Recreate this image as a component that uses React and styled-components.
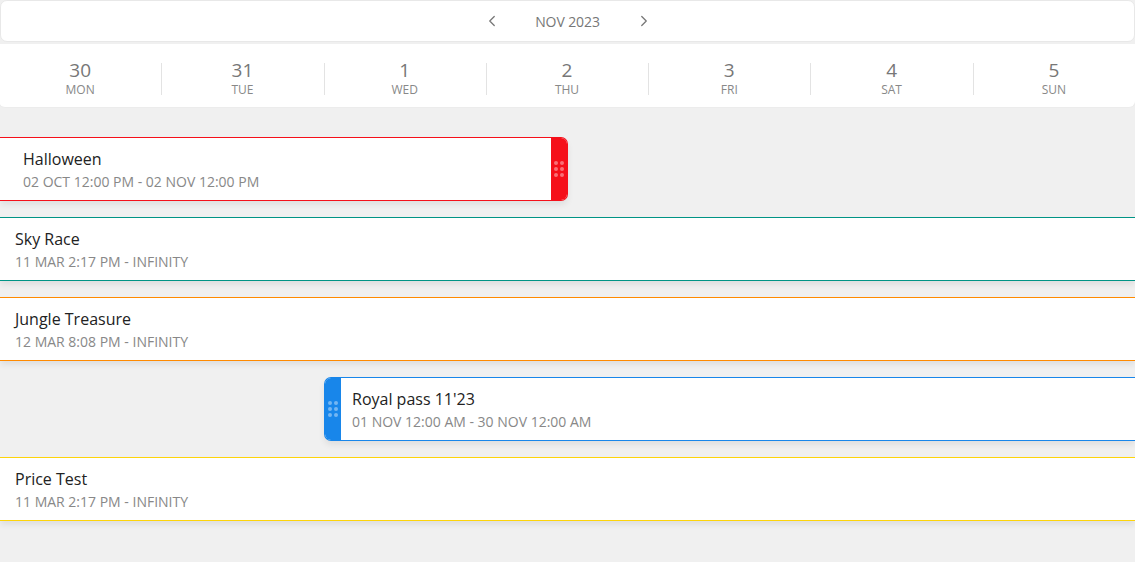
import React from "react";
import styled, { createGlobalStyle } from "styled-components";
import { ChevronLeft, ChevronRight } from "lucide-react";

const GlobalStyle = createGlobalStyle`
  html, body { margin: 0; padding: 0; background: #f0f0f0; }
  body { font-family: "Open Sans", "Noto Sans", sans-serif; overflow: hidden; }
  * { box-sizing: border-box; }
`;

const COL = 1135 / 7;

const Page = styled.div`
  width: 1135px;
  height: 562px;
  display: flex;
  flex-direction: column;
`;

const MonthBar = styled.div`
  height: 42px;
  flex-shrink: 0;
  background: #fff;
  border: 1px solid #e8e8e8;
  border-radius: 7px;
  display: flex;
  align-items: center;
  justify-content: center;
  gap: 27px;
  color: #777;
`;

const NavButton = styled.button`
  border: none;
  background: transparent;
  padding: 0;
  display: flex;
  color: #777;
  cursor: pointer;
`;

const MonthLabel = styled.span`
  font-size: 14px;
  width: 80px;
  text-align: center;
  letter-spacing: -0.1px;
`;

const WeekCard = styled.div`
  margin: 2px -1px 0 -2px;
  height: 64px;
  flex-shrink: 0;
  padding-top: 15px;
  background: #fff;
  border: 1px solid #ececec;
  border-top: none;
  border-radius: 0 0 7px 7px;
  display: grid;
  grid-template-columns: repeat(7, 1fr);
  align-items: start;
`;

const Day = styled.div`
  display: flex;
  flex-direction: column;
  align-items: center;
  background: ${(p) =>
    p.$first ? "none" : "linear-gradient(#e3e3e3, #e3e3e3) left center / 1px 32px no-repeat"};
`;

const DayNum = styled.span`
  font-size: 19px;
  line-height: 22px;
  color: #777;
`;

const DayName = styled.span`
  margin-top: 1px;
  font-size: 12px;
  line-height: 16px;
  color: #888;
`;

const EventList = styled.div`
  margin-top: 29px;
  display: flex;
  flex-direction: column;
  gap: 16px;
`;

const Lane = styled.div`
  height: 64px;
  flex-shrink: 0;
  display: flex;
`;

const Card = styled.div`
  height: 64px;
  background: #fff;
  border-top: 1px solid ${(p) => p.$color};
  border-bottom: 1px solid ${(p) => p.$color};
  border-left: ${(p) => (p.$startVisible ? `1px solid ${p.$color}` : "none")};
  border-right: ${(p) => (p.$endVisible ? `1px solid ${p.$color}` : "none")};
  border-radius: ${(p) =>
    `${p.$startVisible ? 7 : 0}px ${p.$endVisible ? 7 : 0}px ${p.$endVisible ? 7 : 0}px ${p.$startVisible ? 7 : 0}px`};
  box-shadow: 0 4px 6px rgba(0, 0, 0, 0.07);
  display: flex;
  overflow: hidden;
`;

const Handle = styled.div`
  width: 16px;
  flex-shrink: 0;
  background: ${(p) => p.$color};
  display: grid;
  grid-template-columns: repeat(2, 4px);
  grid-auto-rows: 4px;
  gap: 2px;
  align-content: center;
  justify-content: center;
  margin: -1px 0;
`;

const Dot = styled.span`
  width: 4px;
  height: 4px;
  border-radius: 50%;
  background: rgba(255, 255, 255, 0.4);
`;

const Body = styled.div`
  flex: 1;
  padding: 10px 0 0 ${(p) => p.$pad}px;
  display: flex;
  flex-direction: column;
  gap: 2px;
  white-space: nowrap;
`;

const Title = styled.span`
  font-size: 16px;
  line-height: 22px;
  color: #222;
`;

const Sub = styled.span`
  font-size: 14px;
  line-height: 20px;
  color: #888;
`;

const days = [
  ["30", "MON"],
  ["31", "TUE"],
  ["1", "WED"],
  ["2", "THU"],
  ["3", "FRI"],
  ["4", "SAT"],
  ["5", "SUN"],
];

// start/end in day units relative to MON 30 OCT; null = outside visible range
const events = [
  { title: "Halloween", sub: "02 OCT 12:00 PM - 02 NOV 12:00 PM", color: "#f5101a", start: null, end: 3.5 },
  { title: "Sky Race", sub: "11 MAR 2:17 PM - INFINITY", color: "#009485", start: null, end: null },
  { title: "Jungle Treasure", sub: "12 MAR 8:08 PM - INFINITY", color: "#ff8a00", start: null, end: null },
  { title: "Royal pass 11'23", sub: "01 NOV 12:00 AM - 30 NOV 12:00 AM", color: "#1886ea", start: 2, end: null },
  { title: "Price Test", sub: "11 MAR 2:17 PM - INFINITY", color: "#fdd40a", start: null, end: null },
];

function Dots() {
  return Array.from({ length: 6 }).map((_, i) => <Dot key={i} />);
}

function EventCard({ ev }) {
  const startVisible = ev.start !== null;
  const endVisible = ev.end !== null;
  const left = startVisible ? Math.round(ev.start * COL) : 0;
  const right = endVisible ? Math.round(ev.end * COL) : 1135;
  const pad = startVisible ? 11 : endVisible ? 23 : 15;
  return (
    <Lane>
      <Card
        $color={ev.color}
        $startVisible={startVisible}
        $endVisible={endVisible}
        style={{ marginLeft: left, width: right - left }}
      >
        {startVisible && (
          <Handle $color={ev.color}>
            <Dots />
          </Handle>
        )}
        <Body $pad={pad}>
          <Title>{ev.title}</Title>
          <Sub>{ev.sub}</Sub>
        </Body>
        {endVisible && (
          <Handle $color={ev.color}>
            <Dots />
          </Handle>
        )}
      </Card>
    </Lane>
  );
}

export default function App() {
  return (
    <>
      <GlobalStyle />
      <Page>
        <MonthBar>
          <NavButton aria-label="Previous month">
            <ChevronLeft size={18} strokeWidth={1.7} />
          </NavButton>
          <MonthLabel>NOV 2023</MonthLabel>
          <NavButton aria-label="Next month">
            <ChevronRight size={18} strokeWidth={1.7} />
          </NavButton>
        </MonthBar>
        <WeekCard>
          {days.map(([n, d], i) => (
            <Day key={d} $first={i === 0}>
              <DayNum>{n}</DayNum>
              <DayName>{d}</DayName>
            </Day>
          ))}
        </WeekCard>
        <EventList>
          {events.map((ev) => (
            <EventCard key={ev.title} ev={ev} />
          ))}
        </EventList>
      </Page>
    </>
  );
}
